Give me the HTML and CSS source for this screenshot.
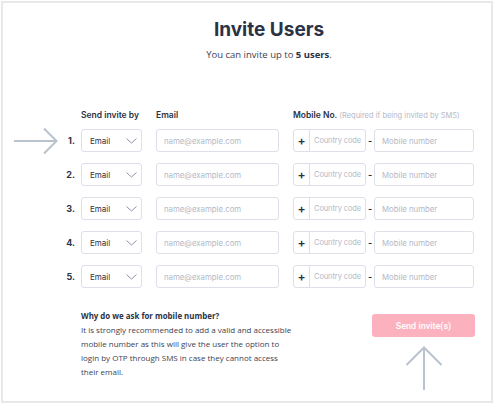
FILE: index.html
```html
<!DOCTYPE html>
<html lang="en">
<head>
    <meta charset="UTF-8">
    <meta name="viewport" content="width=device-width, initial-scale=1.0">
    <title>Invite Users</title>
    <link rel="stylesheet" href="styles.css">
</head>
<body>
    <div class="frame">
        <h1 class="title">Invite Users</h1>
        <p class="subtitle">You can invite up to <b>5 users</b>.</p>

        <div class="cols grid-head">
            <div></div>
            <div class="head">Send invite by</div>
            <div class="head">Email</div>
            <div class="head">Mobile No. <span class="hint">(Required if being invited by SMS)</span></div>
        </div>

        <div class="cols grid-rows">
            <div class="lead">
                <svg class="arrow-right" width="44" height="28" viewBox="0 0 44 28">
                    <path d="M0 14H42M30 1.5L42.5 14L30 26.5" fill="none" stroke="#bac2cd" stroke-width="2"/>
                </svg>
                <span class="num">1.</span>
            </div>
            <div class="select">Email <svg width="11" height="6" viewBox="0 0 11 6"><path d="M0.5 0.5L5.5 5L10.5 0.5" fill="none" stroke="#8d95a5" stroke-width="1"/></svg></div>
            <div class="field placeholder">name@example.com</div>
            <div class="mobile">
                <div class="cc"><span class="plus">+</span><span class="placeholder">Country code</span></div>
                <span class="dash">-</span>
                <div class="field placeholder">Mobile number</div>
            </div>

            <div class="lead"><span class="num">2.</span></div>
            <div class="select">Email <svg width="11" height="6" viewBox="0 0 11 6"><path d="M0.5 0.5L5.5 5L10.5 0.5" fill="none" stroke="#8d95a5" stroke-width="1"/></svg></div>
            <div class="field placeholder">name@example.com</div>
            <div class="mobile">
                <div class="cc"><span class="plus">+</span><span class="placeholder">Country code</span></div>
                <span class="dash">-</span>
                <div class="field placeholder">Mobile number</div>
            </div>

            <div class="lead"><span class="num">3.</span></div>
            <div class="select">Email <svg width="11" height="6" viewBox="0 0 11 6"><path d="M0.5 0.5L5.5 5L10.5 0.5" fill="none" stroke="#8d95a5" stroke-width="1"/></svg></div>
            <div class="field placeholder">name@example.com</div>
            <div class="mobile">
                <div class="cc"><span class="plus">+</span><span class="placeholder">Country code</span></div>
                <span class="dash">-</span>
                <div class="field placeholder">Mobile number</div>
            </div>

            <div class="lead"><span class="num">4.</span></div>
            <div class="select">Email <svg width="11" height="6" viewBox="0 0 11 6"><path d="M0.5 0.5L5.5 5L10.5 0.5" fill="none" stroke="#8d95a5" stroke-width="1"/></svg></div>
            <div class="field placeholder">name@example.com</div>
            <div class="mobile">
                <div class="cc"><span class="plus">+</span><span class="placeholder">Country code</span></div>
                <span class="dash">-</span>
                <div class="field placeholder">Mobile number</div>
            </div>

            <div class="lead"><span class="num">5.</span></div>
            <div class="select">Email <svg width="11" height="6" viewBox="0 0 11 6"><path d="M0.5 0.5L5.5 5L10.5 0.5" fill="none" stroke="#8d95a5" stroke-width="1"/></svg></div>
            <div class="field placeholder">name@example.com</div>
            <div class="mobile">
                <div class="cc"><span class="plus">+</span><span class="placeholder">Country code</span></div>
                <span class="dash">-</span>
                <div class="field placeholder">Mobile number</div>
            </div>
        </div>

        <div class="footer">
            <div class="info">
                <div class="info-title">Why do we ask for mobile number?</div>
                <p>It is strongly recommended to add a valid and accessible<br>
                mobile number as this will give the user the option to<br>
                login by OTP through SMS in case they cannot access<br>
                their email.</p>
            </div>
            <div class="actions">
                <button class="send">Send invite(s)</button>
                <svg class="arrow-up" width="38" height="44" viewBox="0 0 38 44">
                    <path d="M19 44V2M1.5 19L19 1.5L36.5 19" fill="none" stroke="#bac2cd" stroke-width="2"/>
                </svg>
            </div>
        </div>
    </div>
</body>
</html>
```

FILE: styles.css
```css
body {
    margin: 1px 2px 0 1px;
    background-color: #fff;
    font-family: Inter, "Noto Sans", sans-serif;
    color: #2b3245;
}

.frame {
    height: 402px;
    border: 2px solid #e8e8e8;
    padding: 15px 0 0 11px;
    box-sizing: border-box;
}

.title {
    margin: 0 0 0 -11px;
    padding-left: 44px;
    text-align: center;
    font-size: 19px;
    line-height: 24px;
    font-weight: 700;
    color: #2b3245;
}

.subtitle {
    margin: 6px 0 0 -11px;
    padding-left: 44px;
    text-align: center;
    font-family: "Open Sans", sans-serif;
    font-size: 9.5px;
    line-height: 14px;
    color: #3d4250;
}

.subtitle b {
    color: #2b3245;
}

.cols {
    display: grid;
    grid-template-columns: 53px 61px 123px 181px;
    column-gap: 14px;
}

.grid-head {
    margin-top: 47px;
}

.head {
    font-size: 8.5px;
    line-height: 12px;
    font-weight: 600;
    color: #2b3245;
    white-space: nowrap;
}

.hint {
    font-size: 7.5px;
    font-weight: 400;
    color: #b3b9c8;
}

.grid-rows {
    grid-auto-rows: 23px;
    row-gap: 11px;
    margin-top: 7px;
}

.lead {
    display: flex;
    align-items: center;
    justify-content: flex-end;
    margin-right: -14px;
    padding-right: 6px;
    position: relative;
}

.arrow-right {
    position: absolute;
    left: 0;
    top: -2px;
}

.num {
    font-size: 9px;
    font-weight: 700;
    color: #2b3245;
}

.select,
.field,
.cc {
    box-sizing: border-box;
    height: 23px;
    border: 1px solid #dde0e8;
    border-radius: 3px;
    display: flex;
    align-items: center;
}

.select {
    justify-content: space-between;
    padding: 0 4px 0 8px;
    font-size: 8px;
    color: #2b3245;
}

.field {
    padding: 0 7px;
}

.placeholder {
    font-size: 7.8px;
    color: #b3b9c8;
    white-space: nowrap;
}

.mobile {
    display: flex;
    align-items: center;
}

.cc {
    width: 73px;
}

.plus {
    width: 15px;
    height: 100%;
    border-right: 1px solid #dde0e8;
    display: flex;
    align-items: center;
    justify-content: center;
    font-size: 12px;
    font-weight: 600;
    color: #2b3245;
}

.cc .placeholder {
    padding-left: 4px;
    font-size: 7.5px;
    letter-spacing: -0.1px;
}

.dash {
    width: 8px;
    text-align: center;
    font-size: 9px;
    font-weight: 700;
}

.mobile .field {
    flex: 1;
}

.footer {
    display: flex;
    justify-content: space-between;
    margin-top: 21px;
    padding-left: 67px;
    padding-right: 16px;
}

.info {
    font-family: "Open Sans", sans-serif;
    font-size: 8px;
    line-height: 14px;
    color: #3d4250;
    white-space: nowrap;
}

.info-title {
    font-size: 7.9px;
    font-weight: 700;
    color: #2b3245;
}

.info p {
    margin: 0;
}

.actions {
    display: flex;
    flex-direction: column;
    align-items: center;
    padding-top: 5px;
}

.send {
    width: 103px;
    height: 23px;
    border: none;
    border-radius: 3px;
    background-color: #fcb2be;
    color: #fff;
    font-family: Roboto, sans-serif;
    font-size: 9px;
    font-weight: 500;
}

.arrow-up {
    margin-top: 9px;
}
```
